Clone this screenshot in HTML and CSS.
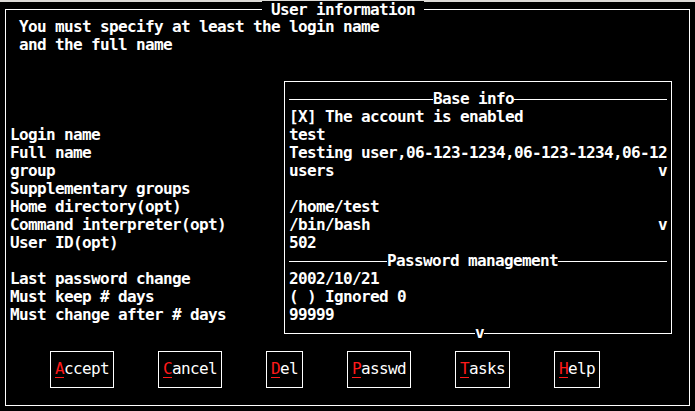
FILE: index.html
```html
<!DOCTYPE html>
<html>
<head>
<meta charset="utf-8">
<link rel="stylesheet" href="styles.css">
</head>
<body>
<div class="screen">
  <div class="frame">
    <div class="title">User information</div>
    <div class="msg">
      <div class="line">You must specify at least the login name</div>
      <div class="line">and the full name</div>
    </div>
    <div class="main">
      <div class="labels">
        <div class="line">Login name</div>
        <div class="line">Full name</div>
        <div class="line">group</div>
        <div class="line">Supplementary groups</div>
        <div class="line">Home directory(opt)</div>
        <div class="line">Command interpreter(opt)</div>
        <div class="line">User ID(opt)</div>
        <div class="line"></div>
        <div class="line">Last password change</div>
        <div class="line">Must keep # days</div>
        <div class="line">Must change after # days</div>
      </div>
      <div class="box">
        <div class="sep sep-base"><span class="sep-text">Base info</span></div>
        <div class="line">[X] The account is enabled</div>
        <div class="line">test</div>
        <div class="line">Testing user,06-123-1234,06-123-1234,06-12</div>
        <div class="line combo"><span>users</span><span>v</span></div>
        <div class="line"></div>
        <div class="line">/home/test</div>
        <div class="line combo"><span>/bin/bash</span><span>v</span></div>
        <div class="line">502</div>
        <div class="sep sep-pw"><span class="sep-text">Password management</span></div>
        <div class="line">2002/10/21</div>
        <div class="line">( ) Ignored 0</div>
        <div class="line">99999</div>
        <span class="more">v</span>
      </div>
    </div>
    <div class="buttons">
      <div class="btn"><u class="hot">A</u>ccept</div>
      <div class="btn"><u class="hot">C</u>ancel</div>
      <div class="btn"><u class="hot">D</u>el</div>
      <div class="btn"><u class="hot">P</u>asswd</div>
      <div class="btn"><u class="hot">T</u>asks</div>
      <div class="btn"><u class="hot">H</u>elp</div>
    </div>
  </div>
</div>
</body>
</html>
```
FILE: styles.css
```css
html, body {
  margin: 0;
  padding: 0;
  background: #000;
}
body {
  width: 695px;
  height: 411px;
  overflow: hidden;
  color: #fff;
  font-family: "DejaVu Sans Mono", "Liberation Mono", monospace;
  font-weight: bold;
  font-size: 16px;
  letter-spacing: -0.633px;
  line-height: 18px;
}
.screen {
  border-top: 2px solid #dcdad6;
  height: 409px;
}
.frame {
  position: relative;
  box-sizing: border-box;
  margin: 7px 0 0 5px;
  width: 685px;
  height: 397px;
  border: 1px solid #fff;
  padding: 8px 0 0 4px;
}
.title {
  position: absolute;
  top: -9px;
  left: 256px;
  padding: 0 9px;
  background: #000;
  height: 18px;
}
.line {
  height: 18px;
  white-space: pre;
}
.msg {
  padding-left: 9px;
  margin-bottom: 18px;
}
.main {
  display: flex;
  height: 262px;
}
.labels {
  width: 274px;
  padding-top: 54px;
}
.box {
  position: relative;
  box-sizing: border-box;
  margin-top: 9px;
  width: 388px;
  height: 253px;
  border: 1px solid #fff;
  padding: 8px 4px 9px 4px;
}
.sep {
  display: flex;
  align-items: center;
  height: 18px;
}
.sep::before,
.sep::after {
  content: "";
  height: 1px;
  background: #fff;
}
.sep::after {
  flex: 1;
}
.sep-base::before {
  width: 144px;
}
.sep-pw::before {
  width: 98px;
}
.sep-text {
  white-space: pre;
}
.combo {
  display: flex;
  justify-content: space-between;
}
.more {
  position: absolute;
  left: 190px;
  top: 242px;
  width: 9px;
  height: 18px;
  text-align: center;
  background: #000;
}
.buttons {
  display: flex;
  gap: 44px;
  margin: 17px 0 0 40px;
}
.btn {
  border: 1px solid #fff;
  padding: 8px 4px 9px 4px;
  height: 18px;
  font-weight: normal;
  white-space: pre;
}
.hot {
  color: #ff1a1a;
  text-decoration: underline;
  text-decoration-color: #ff1a1a;
  text-underline-offset: 3px;
}
```
